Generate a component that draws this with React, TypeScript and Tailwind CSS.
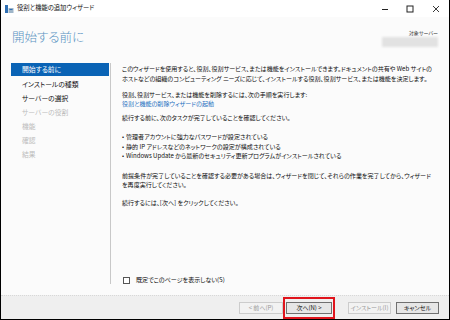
import React from 'react';

const jp = "font-['Noto_Sans_CJK_JP','Noto_Sans',sans-serif] [font-feature-settings:'palt']";

const navItems = [
  { label: '開始する前に', state: 'active' },
  { label: 'インストールの種類', state: 'normal' },
  { label: 'サーバーの選択', state: 'normal' },
  { label: 'サーバーの役割', state: 'disabled' },
  { label: '機能', state: 'disabled' },
  { label: '確認', state: 'disabled' },
  { label: '結果', state: 'disabled' },
];

const bullets = [
  '管理者アカウントに強力なパスワードが設定されている',
  '静的 IP アドレスなどのネットワークの設定が構成されている',
  'Windows Update から最新のセキュリティ更新プログラムがインストールされている',
];

const TitleBar: React.FC = () => (
  <div className="flex h-[17px] items-center bg-white">
    <svg className="ml-[4px] h-[8px] w-[9px]" viewBox="0 0 9 8">
      <rect x="0" y="0" width="3" height="8" fill="#2f6fb3" />
      <rect x="3.5" y="3" width="5" height="5" fill="#9fb6c9" />
      <rect x="4.5" y="4" width="3" height="1" fill="#2f6fb3" />
    </svg>
    <span className="ml-[3px] text-[6.3px] leading-none text-[#111]">役割と機能の追加ウィザード</span>
    <div className="ml-auto flex items-center">
      <svg className="h-[8px] w-[8px]" viewBox="0 0 8 8">
        <line x1="1" y1="4.5" x2="7" y2="4.5" stroke="#222" strokeWidth="1" />
      </svg>
      <svg className="ml-[17px] h-[8px] w-[8px]" viewBox="0 0 8 8">
        <rect x="1" y="1" width="6" height="6" fill="none" stroke="#222" strokeWidth="1" />
      </svg>
      <svg className="ml-[18px] mr-[9px] h-[8px] w-[8px]" viewBox="0 0 8 8">
        <path d="M1 1 L7 7 M7 1 L1 7" stroke="#222" strokeWidth="0.9" />
      </svg>
    </div>
  </div>
);

const Header: React.FC = () => (
  <div className="flex h-[38px] items-start">
    <h1 className="ml-[11px] mt-[12px] text-[12.5px] font-light leading-[16px] text-[#5a93c2]">開始する前に</h1>
    <div className="ml-auto mr-[11px] mt-[13px] flex flex-col items-end">
      <span className="text-[5px] leading-[6px] text-[#333]">対象サーバー</span>
      <div className="mt-[1px] h-[10px] w-[56px] bg-[#e2e2e2] blur-[1px]" />
    </div>
  </div>
);

const Nav: React.FC = () => (
  <div className="mb-[11px] mt-[8px] w-[110px] shrink-0 border-r border-[#c8c8c8]">
    {navItems.map((item) => (
      <div
        key={item.label}
        className={
          item.state === 'active'
            ? 'ml-[10px] mb-[1px] flex h-[13px] w-[98px] items-center bg-[#0a63b5] pl-[11px] text-white'
            : item.state === 'normal'
            ? 'ml-[10px] flex h-[14px] items-center pl-[11px] text-[#111]'
            : 'ml-[10px] flex h-[14px] items-center pl-[11px] text-[#bdbdbd]'
        }
      >
        <span className="text-[6.8px] leading-none">{item.label}</span>
      </div>
    ))}
  </div>
);

const Content: React.FC = () => (
  <div className="flex min-w-0 flex-1 flex-col pl-[11px] pt-[9px] text-[6.05px] text-[#0d0d0d]">
    <p className="leading-[10px] whitespace-nowrap">
      このウィザードを使用すると、役割、役割サービス、または機能をインストールできます。ドキュメントの共有や Web サイトの
      <br />
      ホストなどの組織のコンピューティング ニーズに応じて、インストールする役割、役割サービス、または機能を決定します。
    </p>
    <p className="mt-[6px] leading-[9px] whitespace-nowrap">
      役割、役割サービス、または機能を削除するには、次の手順を実行します:
      <br />
      <span className="text-[#1c6fc0]">役割と機能の削除ウィザードの起動</span>
    </p>
    <p className="mt-[5px] leading-[10px]">続行する前に、次のタスクが完了していることを確認してください。</p>
    <ul className="mt-[9px]">
      {bullets.map((b) => (
        <li key={b} className="flex h-[9.5px] items-center whitespace-nowrap">
          <span className="w-[4px]">•</span>
          <span>{b}</span>
        </li>
      ))}
    </ul>
    <p className="mt-[10px] leading-[9px] whitespace-nowrap">
      前提条件が完了していることを確認する必要がある場合は、ウィザードを閉じて、それらの作業を完了してから、ウィザード
      <br />
      を再度実行してください。
    </p>
    <p className="mt-[9px] leading-[10px]">続行するには、[次へ] をクリックしてください。</p>
    <label className="mb-[10px] mt-auto flex h-[10px] items-center">
      <span className="ml-[1px] h-[7px] w-[7px] border border-[#555] bg-white" />
      <span className="ml-[6px]">既定でこのページを表示しない(S)</span>
    </label>
  </div>
);

const Button: React.FC<{ label: string; disabled?: boolean; width: string }> = ({ label, disabled, width }) => (
  <div
    className={
      disabled
        ? `flex h-[12px] ${width} items-center justify-center border border-[#cccccc] bg-[#f2f2f2] text-[6px] text-[#9a9a9a]`
        : `flex h-[12px] ${width} items-center justify-center border border-[#707070] bg-[#e6e6e6] text-[6px] text-[#111]`
    }
  >
    {label}
  </div>
);

const Footer: React.FC = () => (
  <div className="flex h-[24px] items-center justify-end border-t border-dotted border-[#d8d8d8] bg-[#efefef] pr-[10px]">
    <Button label="< 前へ(P)" disabled width="w-[44px]" />
    <div className="flex h-[22px] items-center border-2 border-[#e0141c] pl-[1px] pr-[1px]">
      <Button label="次へ(N) >" width="w-[46px]" />
    </div>
    <div className="ml-[13px]">
      <Button label="インストール(I)" disabled width="w-[43px]" />
    </div>
    <div className="ml-[5px]">
      <Button label="キャンセル" width="w-[43px]" />
    </div>
  </div>
);

const App: React.FC = () => {
  return (
    <div className={`${jp} flex h-[320px] w-[450px] flex-col overflow-hidden border-x border-b border-black bg-white`}>
      <TitleBar />
      <div className="flex flex-1 flex-col bg-[#fbfbfb]">
        <Header />
        <div className="flex flex-1">
          <Nav />
          <Content />
        </div>
      </div>
      <Footer />
    </div>
  );
};

export default App;
